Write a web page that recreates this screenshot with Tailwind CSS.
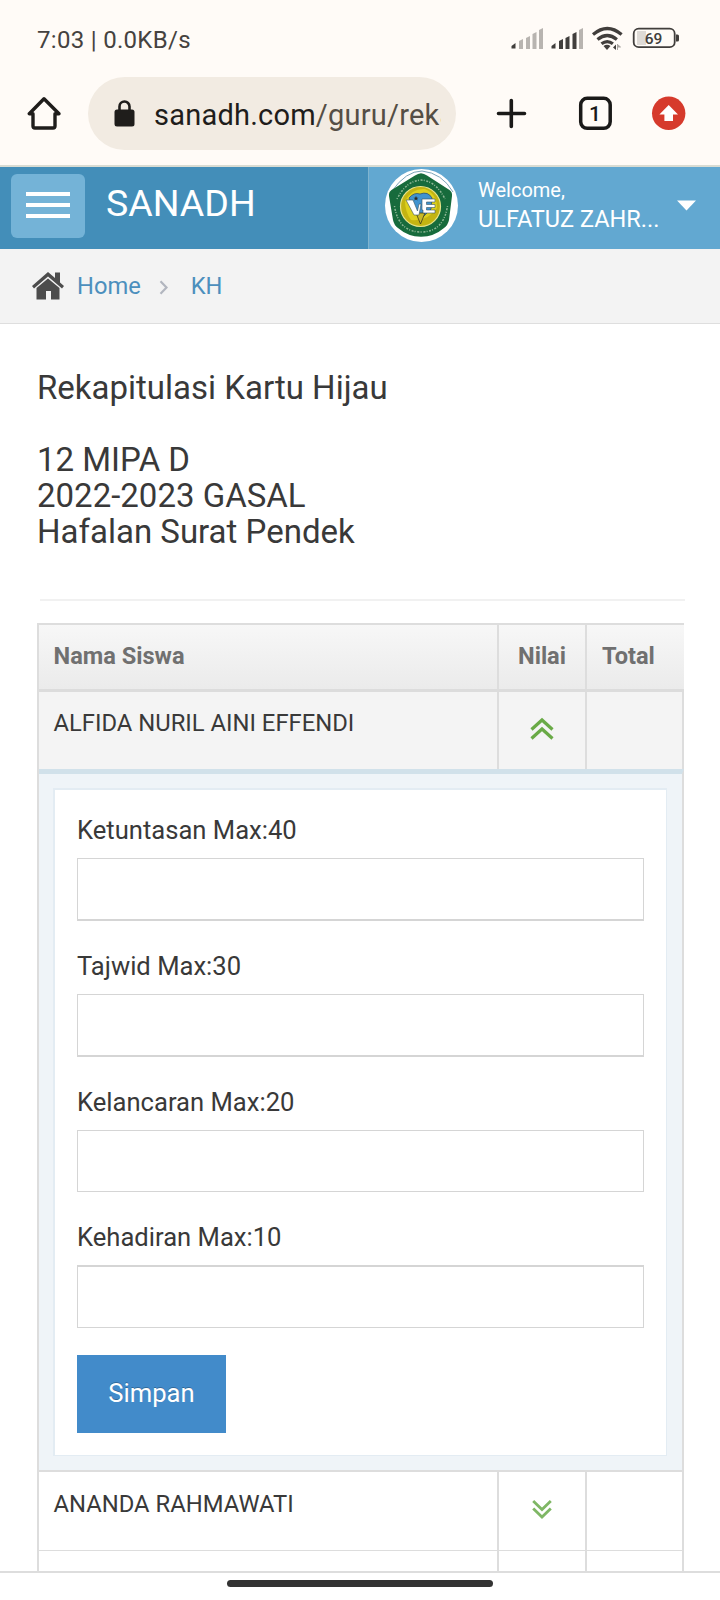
<!DOCTYPE html>
<html lang="id">
<head>
<meta charset="utf-8">
<title>SANADH</title>
<script src="https://cdn.jsdelivr.net/npm/@tailwindcss/browser@4"></script>
</head>
<body class="w-[720px] h-[1600px] overflow-hidden flex flex-col bg-white text-[#393939] font-['Roboto',sans-serif]">

<!-- Status bar -->
<div class="h-[77px] shrink-0 bg-[#fffbf7] flex items-start justify-between pl-[37px] pr-[41px]">
  <div class="mt-[26px] text-[24px] leading-[28px] tracking-[0.3px] text-[#454240]"><span class="whitespace-nowrap">7:03 | 0.0KB/s</span></div>
  <svg class="mt-[26px] w-[168px] h-[26px]" viewBox="511 26 168 26">
    <g fill="#b8b4b0"><path d="M519 41l4-2v10h-4z"/><path d="M526 38l4-2v13h-4z"/><path d="M532.500 34l4-2v17h-4z"/><path d="M539 30l4-2v21h-4z"/><path d="M579 30l4-2v21h-4z"/></g>
    <g fill="#413e3c"><path d="M511.500 46l4-3v5.500h-4z"/><path d="M551.500 46l4-3v5.500h-4z"/><path d="M559 41l4-2v10h-4z"/><path d="M565.500 38l4-2v13h-4z"/><path d="M572.500 34l4-2v17h-4z"/></g>
    <g fill="none" stroke="#413e3c" stroke-width="3.200"><path d="M593 34.500q14.300-12 28.600 0"/><path d="M597.500 39.500q9.700-8 19.400 0"/><path d="M601.500 43.800q5.700-4.500 11.400 0"/></g>
    <path d="M603.500 46q3.500-2.500 7 0l-3.500 4z" fill="#413e3c"/>
    <path d="M613 47.500l3-3v5.500z" fill="#413e3c"/><path d="M617.500 44v6M617.500 44.500l3 2.500h-3z" stroke="#aaa6a2" fill="#aaa6a2"/>
    <rect x="637" y="31" width="9" height="14" fill="#dedad6"/>
    <rect x="633.700" y="28.700" width="41" height="18.500" rx="5" fill="none" stroke="#413e3c" stroke-width="1.800"/>
    <path d="M676 34.500h1.500q1.500 0 1.500 1.500v4q0 1.500-1.500 1.500H676z" fill="#413e3c"/>
    <text x="653.500" y="44" text-anchor="middle" font-size="15.500" font-weight="500" fill="#413e3c">69</text>
  </svg>
</div>

<!-- Browser toolbar -->
<div class="h-[90px] shrink-0 bg-[#fffbf7] border-b-2 border-[#d9dcd3] flex items-start">
  <svg class="ml-[27px] mt-[19px] w-[35px] h-[35px]" viewBox="27 96 35 35" fill="none" stroke="#1f1d1b" stroke-width="3.400" stroke-linejoin="round"><path d="M29.300 113.700H33V126q0 2 2 2h18q2 0 2-2v-12.300h4L44 98.800z"/></svg>
  <div class="ml-[26px] w-[368px] h-[73px] rounded-full bg-[#f2ebe2] flex items-center pl-[26px] pr-[14px]">
    <svg class="w-[21px] h-[28px] shrink-0" viewBox="0 0 21 28"><rect x="0.500" y="9.500" width="20" height="17" rx="2.500" fill="#1f1d1b"/><path d="M5.500 11V6.500a5 5 0 0 1 10 0V11" fill="none" stroke="#1f1d1b" stroke-width="2.600"/></svg>
    <div class="ml-[19px] w-[287px] overflow-hidden whitespace-nowrap text-[29px] leading-[40px] tracking-[0.22px] text-[#554e45] mt-[2px]"><span class="text-[#1f1d1b]">sanadh.com</span>/guru/reka</div>
  </div>
  <svg class="ml-[40px] mt-[21px] w-[31px] h-[31px]" viewBox="0 0 31 31" stroke="#1a1918" stroke-width="3.600" stroke-linecap="round"><path d="M15.300 2.500v26M2.500 15.500h26"/></svg>
  <svg class="ml-[51px] mt-[19px] w-[35px] h-[35px]" viewBox="0 0 35 35"><rect x="2.700" y="2.300" width="29.500" height="30" rx="6.500" fill="none" stroke="#1a1918" stroke-width="3.500"/><text x="17" y="24.500" text-anchor="middle" font-size="21" font-weight="500" fill="#1a1918">1</text></svg>
  <svg class="ml-[38px] mt-[19px] w-[35px] h-[35px]" viewBox="0 0 35 35"><circle cx="17.700" cy="17.300" r="16.700" fill="#d63a2c"/><path d="M17.700 9l9.300 9.500h-5V25h-8.600v-6.500h-5z" fill="#fff"/></svg>
</div>

<!-- Site header -->
<div class="h-[82px] shrink-0 bg-[#438eb9] flex">
  <div class="w-[368px] flex">
    <div class="ml-[11px] mt-[7px] w-[74px] h-[64px] rounded-[6px] bg-[#74b3d7] flex flex-col items-center pt-[18px] gap-[7px]">
      <div class="w-[44px] h-[4px] bg-white"></div><div class="w-[44px] h-[4px] bg-white"></div><div class="w-[44px] h-[4px] bg-white"></div>
    </div>
    <div class="ml-[21px] mt-[14px] text-[37.5px] leading-[44px] text-white whitespace-nowrap">SANADH</div>
  </div>
  <div class="flex-1 bg-[#62a8d1] border-l border-[#7fb4cf] flex">
    <svg class="ml-[15px] mt-[1px] w-[75px] h-[75px]" viewBox="0 0 75 75">
      <circle cx="37.500" cy="37.500" r="36.500" fill="#fff"/>
      <path d="M8 23Q22 3 38 3q20 2 31 21" fill="none" stroke="#7ca3b8" stroke-width="1"/>
      <path d="M37 5.300Q40 5.500 43 7.500L65.500 22q3 2 2.500 6l-3 24q-1 5-5 8-10 8.700-23 8.700T14 60q-4-3-5-8L5 28q-.5-4 2.500-6L31 7.500q3-2 6-2.200z" fill="#176b3c"/>
      <g fill="none" stroke="#8fb796" stroke-width="1.500" stroke-dasharray="1 1.600 2 1.200"><path d="M13 31Q22 13 37 12q15 1 24 19"/><path d="M10.500 38q4 26 26.500 26t26.500-26"/></g>
      <circle cx="36.500" cy="38.500" r="20" fill="#c3b412" stroke="#e8e38c" stroke-width="1.200"/>
      <path d="M21 33q7-13 20-12 12 5 12 19-10 14-26 12-6-8-6-19z" fill="#ddd01d"/>
      <path d="M25 30q5-6 11-4 8-3 12 4l-1 11-8 8-7-4z" fill="#4093cf" stroke="#31536b" stroke-width=".8"/>
      <path d="M32 45h9l-4.500 11z" fill="#c9b927" stroke="#3e3c19" stroke-width=".8"/>
      <path d="M22 32h7l4.500 11L35 36h2l-2 11h-5z" fill="#fff" stroke="#3b5560" stroke-width=".6"/>
      <path d="M38 31h13v3h-8.500v2.500H51v3h-8.500V42H51v3H39v-3h-1z" fill="#fff" stroke="#3b5560" stroke-width=".6"/>
      <path d="M32 28l.8 1.700h1.700l-1.400 1.100.5 1.800-1.600-1-1.600 1 .5-1.800-1.400-1.100h1.700z" fill="#2a2a22"/>
    </svg>
    <div class="ml-[19px] mt-[9px] w-[185px] text-white whitespace-nowrap">
      <div class="text-[20px] leading-[28px]">Welcome,</div>
      <div class="text-[23.5px] leading-[30px]">ULFATUZ ZAHR...</div>
    </div>
    <svg class="ml-[14px] mt-[33px] w-[19px] h-[11px]" viewBox="0 0 19 11"><path d="M0 .5h19L9.500 10.500z" fill="#fff"/></svg>
  </div>
</div>

<!-- Breadcrumb -->
<div class="h-[75px] shrink-0 bg-[#f3f3f3] border-b border-[#dedede] flex items-start pl-[32px] text-[23.7px] leading-[28px] text-[#4c8fbd]">
  <svg class="mt-[23px] w-[32px] h-[28px]" viewBox="0 0 32 28" fill="#4c4c4c"><path d="M16 0l7 6V.5h5V10.500l4 3.500-2 2.500L16 4.500 2 16.500 0 14z"/><path d="M16 6.500L27.500 16v11.500H19V19h-5v8.500H4.500V16z"/></svg>
  <span class="ml-[13px] mt-[23px]">Home</span>
  <svg class="ml-[18px] mt-[31px] w-[10px] h-[15px]" viewBox="0 0 10 15" fill="none" stroke="#b2b6bf" stroke-width="2.200"><path d="M1.500 1.200l6 6.300-6 6.300"/></svg>
  <span class="ml-[22px] mt-[23px]">KH</span>
</div>

<!-- Page content -->
<div class="flex-1 min-h-0 overflow-hidden pl-[37px] pr-[36px] flex flex-col">
  <div class="pt-[45.5px] text-[33px] leading-[36.3px] text-[#393939] whitespace-nowrap">
    <div>Rekapitulasi Kartu Hijau</div>
    <div class="mt-[36px]">12 MIPA D</div>
    <div>2022-2023 GASAL</div>
    <div>Hafalan Surat Pendek</div>
  </div>
  <div class="mt-[48.3px] h-[2px] shrink-0 bg-[#f1f1f1] ml-[3px] -mr-px"></div>

  <div class="mt-[22px] w-[647px] shrink-0 border-l-2 border-t-2 border-[#dddddd] text-[23.8px] leading-[28px]">
    <div class="h-[67px] flex border-b-[3px] border-[#dcdcdc] bg-linear-to-b from-[#f7f7f7] to-[#ebebeb] text-[#707070] font-bold text-[23.6px]">
      <div class="w-[460px] pl-[14.5px] pt-[17px] border-r-2 border-[#dddddd]">Nama Siswa</div>
      <div class="w-[88px] pt-[17px] text-center border-r-2 border-[#dddddd]">Nilai</div>
      <div class="pl-[15px] pt-[17px]">Total</div>
    </div>
    <div class="h-[77px] flex bg-[#f4f4f4] border-r-2 border-[#dddddd]">
      <div class="w-[460px] pl-[14.5px] pt-[17px] border-r-2 border-[#dddddd]">ALFIDA NURIL AINI EFFENDI</div>
      <div class="w-[88px] border-r-2 border-[#dddddd] flex justify-center pt-[25px]">
        <svg class="w-[24px] h-[24px]" viewBox="0 0 24 24" fill="none" stroke="#69aa46" stroke-width="3.200"><path d="M1.500 12.500L12 3l10.500 9.500M1.500 21.500L12 12l10.500 9.500"/></svg>
      </div>
    </div>
    <div class="h-[703px] border-t-[5px] border-t-[#d1e1ea] border-r-2 border-r-[#dddddd] border-b-2 border-b-[#dddddd] bg-[#eff4f8] pt-[14px] pl-[14px] pr-[15px]">
      <div class="h-[668px] border-2 border-r border-b border-[#e3ecf3] bg-white pl-[22px] pr-[22px] pt-[26px] text-[25.6px]">
        <div>
          <div>Ketuntasan Max:40</div>
          <div class="mt-[14px] h-[63px] border border-b-2 border-[#d5d5d5] bg-white"></div>
        </div>
        <div class="mt-[31px]">
          <div>Tajwid Max:30</div>
          <div class="mt-[14px] h-[63px] border border-b-2 border-[#d5d5d5] bg-white"></div>
        </div>
        <div class="mt-[31px]">
          <div>Kelancaran Max:20</div>
          <div class="mt-[14px] h-[62px] border border-[#d5d5d5] bg-white"></div>
        </div>
        <div class="mt-[31px]">
          <div>Kehadiran Max:10</div>
          <div class="mt-[14px] h-[63px] border border-t-2 border-[#d5d5d5] bg-white"></div>
        </div>
        <div class="mt-[27px] w-[149px] h-[78px] bg-[#428bca] text-white text-center pt-[24px] [text-shadow:0_-1px_0_rgba(0,0,0,0.25)]">Simpan</div>
      </div>
    </div>
    <div class="h-[79px] flex border-r-2 border-b border-[#dddddd]">
      <div class="w-[460px] pl-[14.5px] pt-[18px] border-r-2 border-[#dddddd]">ANANDA RAHMAWATI</div>
      <div class="w-[88px] border-r-2 border-[#dddddd] flex justify-center pt-[27px]">
        <svg class="w-[20px] h-[20px]" viewBox="0 0 20 20" fill="none" stroke="#7fb765" stroke-width="2.800"><path d="M1.200 2L10 10.500 18.800 2M1.200 9.500L10 18l8.800-8.500"/></svg>
      </div>
    </div>
    <div class="h-[40px] flex border-r-2 border-[#dddddd]">
      <div class="w-[460px] border-r-2 border-[#dddddd]"></div>
      <div class="w-[88px] border-r-2 border-[#dddddd]"></div>
    </div>
  </div>
</div>

<!-- System navigation bar -->
<div class="h-[29px] shrink-0 bg-white border-t-2 border-[#dddddd] flex justify-center pt-[7px]">
  <div class="w-[266px] h-[7px] rounded-full bg-[#333333]"></div>
</div>
</body>
</html>
